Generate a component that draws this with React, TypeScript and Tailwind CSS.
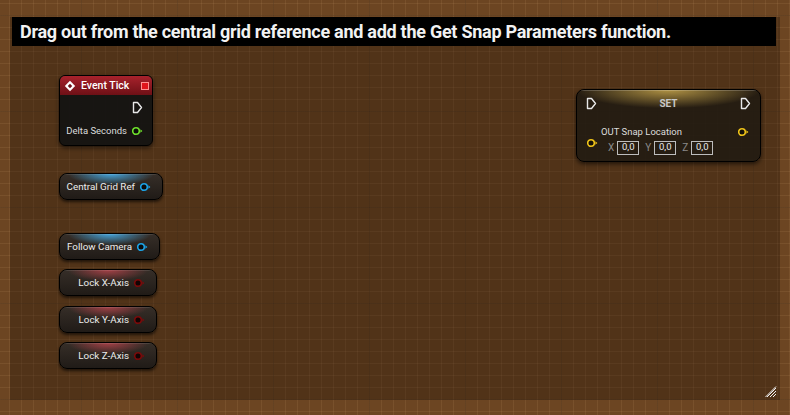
import React from 'react';

const font = { fontFamily: 'Roboto, "Noto Sans", sans-serif' };

function Pin({ color, fill = 'none' }: { color: string; fill?: string }) {
  return (
    <svg width="12" height="10" viewBox="0 0 12 10" className="shrink-0">
      <circle cx="5" cy="5" r="3.3" fill={fill} stroke={color} strokeWidth="1.6" />
      <path d="M9.4 3.2 L11.4 5 L9.4 6.8 Z" fill={color} />
    </svg>
  );
}

function Exec() {
  return (
    <svg width="11" height="13" viewBox="0 0 11 13">
      <path d="M1.5 1.5 H5.5 L9.5 6.5 L5.5 11.5 H1.5 Z" fill="none" stroke="#e8e8e8" strokeWidth="1.4" strokeLinejoin="round" />
    </svg>
  );
}

type VarProps = { label: string; x: number; y: number; w: number; kind: 'blue' | 'red' };

function VarNode({ label, x, y, w, kind }: VarProps) {
  const glow =
    kind === 'blue'
      ? 'bg-[radial-gradient(ellipse_42%_45%_at_50%_0%,rgba(70,175,235,0.9),transparent)]'
      : 'bg-[radial-gradient(ellipse_42%_45%_at_50%_0%,rgba(200,70,80,0.75),transparent)]';
  return (
    <div
      className="absolute h-[27px] rounded-[8px] border border-black bg-[linear-gradient(to_bottom,#362e28,#201b17)] shadow-[0_2px_3px_rgba(0,0,0,0.6)] overflow-hidden"
      style={{ left: x, top: y, width: w }}
    >
      <div className={`absolute inset-0 ${glow}`} />
      <div className="absolute inset-x-0 top-0 h-px bg-white/10" />
      <div className="relative flex h-full items-center justify-end gap-[4px] pr-[11px] pt-px text-[9.8px] text-[#ececec]">
        <span>{label}</span>
        {kind === 'blue' ? <Pin color="#1ca3e6" fill="#0b0b0b" /> : <Pin color="#7a0a0a" fill="#120404" />}
      </div>
    </div>
  );
}

function ValBox({ axis }: { axis: string }) {
  return (
    <div className="flex items-center gap-[3px]">
      <span className="text-[10px] text-[#8a8a8a]">{axis}</span>
      <div className="flex h-[14px] w-[22px] items-center justify-center border border-[#bdbdbd] text-[9.5px] text-[#e8e8e8]">0,0</div>
    </div>
  );
}

export default function App() {
  return (
    <div
      className="relative h-[415px] w-[790px] overflow-hidden bg-[#6c4522] bg-[linear-gradient(to_right,rgba(40,22,8,0.25)_1px,transparent_1px),linear-gradient(to_bottom,rgba(40,22,8,0.25)_1px,transparent_1px),linear-gradient(to_right,rgba(255,210,160,0.08)_1px,transparent_1px),linear-gradient(to_bottom,rgba(255,210,160,0.08)_1px,transparent_1px)] bg-[size:96px_96px,96px_96px,12px_12px,12px_12px] bg-[position:81px_15px,81px_15px,9px_3px,9px_3px]"
      style={font}
    >
      <div className="absolute left-[10px] right-[10px] top-[17px] bottom-[15px] bg-[rgba(20,10,4,0.3)]" />

      <div className="absolute left-[12px] right-[14px] top-[17px] flex h-[29px] items-center bg-black pl-[8px]">
        <span className="text-[18px] font-bold tracking-[-0.27px] text-[#f2f2f2]">
          Drag out from the central grid reference and add the Get Snap Parameters function.
        </span>
      </div>

      {/* Event Tick */}
      <div className="absolute left-[59px] top-[75px] h-[71px] w-[94px] overflow-hidden rounded-[6px] border border-black bg-[rgba(18,18,18,0.92)] shadow-[0_2px_4px_rgba(0,0,0,0.6)]">
        <div className="flex h-[19px] items-center gap-[5px] bg-[linear-gradient(to_bottom,#a8222c,#6e1016)] pl-[4px] pr-[3px]">
          <svg width="12" height="12" viewBox="0 0 12 12">
            <path d="M6 0.8 L11.2 6 L6 11.2 L0.8 6 Z" fill="#fff" />
            <path d="M6 3.8 L8.2 6 L6 8.2 L3.8 6 Z" fill="#6e1016" />
          </svg>
          <span className="text-[10.5px] font-medium text-white">Event Tick</span>
          <div className="ml-auto h-[8px] w-[8px] border border-[#ff9090] bg-[#e0151c]" />
        </div>
        <div className="flex justify-end pr-[9px] pt-[6px]">
          <Exec />
        </div>
        <div className="flex items-center justify-end gap-[4px] pr-[9px] pt-[10px] text-[9.5px] text-[#dcdcdc]">
          <span>Delta Seconds</span>
          <Pin color="#6fe22c" fill="#0b0b0b" />
        </div>
      </div>

      <VarNode label="Central Grid Ref" x={59} y={173} w={104} kind="blue" />
      <VarNode label="Follow Camera" x={59} y={233} w={101} kind="blue" />
      <VarNode label="Lock X-Axis" x={59} y={269} w={98} kind="red" />
      <VarNode label="Lock Y-Axis" x={59} y={306} w={98} kind="red" />
      <VarNode label="Lock Z-Axis" x={59} y={342} w={98} kind="red" />

      {/* SET */}
      <div className="absolute left-[576px] top-[89px] h-[73px] w-[185px] overflow-hidden rounded-[8px] border border-black bg-[rgba(32,26,18,0.86)] shadow-[0_2px_4px_rgba(0,0,0,0.6)]">
        <div className="absolute inset-x-0 top-0 h-[26px] bg-[radial-gradient(ellipse_50%_70%_at_50%_0%,rgba(210,175,80,0.8),transparent)]" />
        <div className="absolute inset-x-0 top-0 h-px bg-white/20" />
        <div className="relative flex h-[24px] items-center justify-between px-[9px] pt-[2px]">
          <Exec />
          <span className="text-[10px] font-bold text-[#c8c8c8]">SET</span>
          <Exec />
        </div>
        <div className="relative flex pl-[9px] pr-[11px] pt-[12px]">
          <div className="pt-[12px]">
            <Pin color="#f0c419" fill="#141008" />
          </div>
          <div className="ml-[3px] flex flex-col">
            <span className="text-[9.5px] leading-[12px] text-[#dcdcdc]">OUT Snap Location</span>
            <div className="mt-[2px] flex gap-[6px] pl-[7px]">
              <ValBox axis="X" />
              <ValBox axis="Y" />
              <ValBox axis="Z" />
            </div>
          </div>
          <div className="ml-auto pt-[1px]">
            <Pin color="#f0c419" fill="#141008" />
          </div>
        </div>
      </div>

      {/* resize grip */}
      <svg className="absolute left-[765px] top-[386px]" width="12" height="12" viewBox="0 0 12 12">
        <path d="M11 2 L2 11 M11 5 L5 11 M11 8 L8 11 M11 0.5 L0.5 11" stroke="#f0f0f0" strokeWidth="1" />
      </svg>
    </div>
  );
}
